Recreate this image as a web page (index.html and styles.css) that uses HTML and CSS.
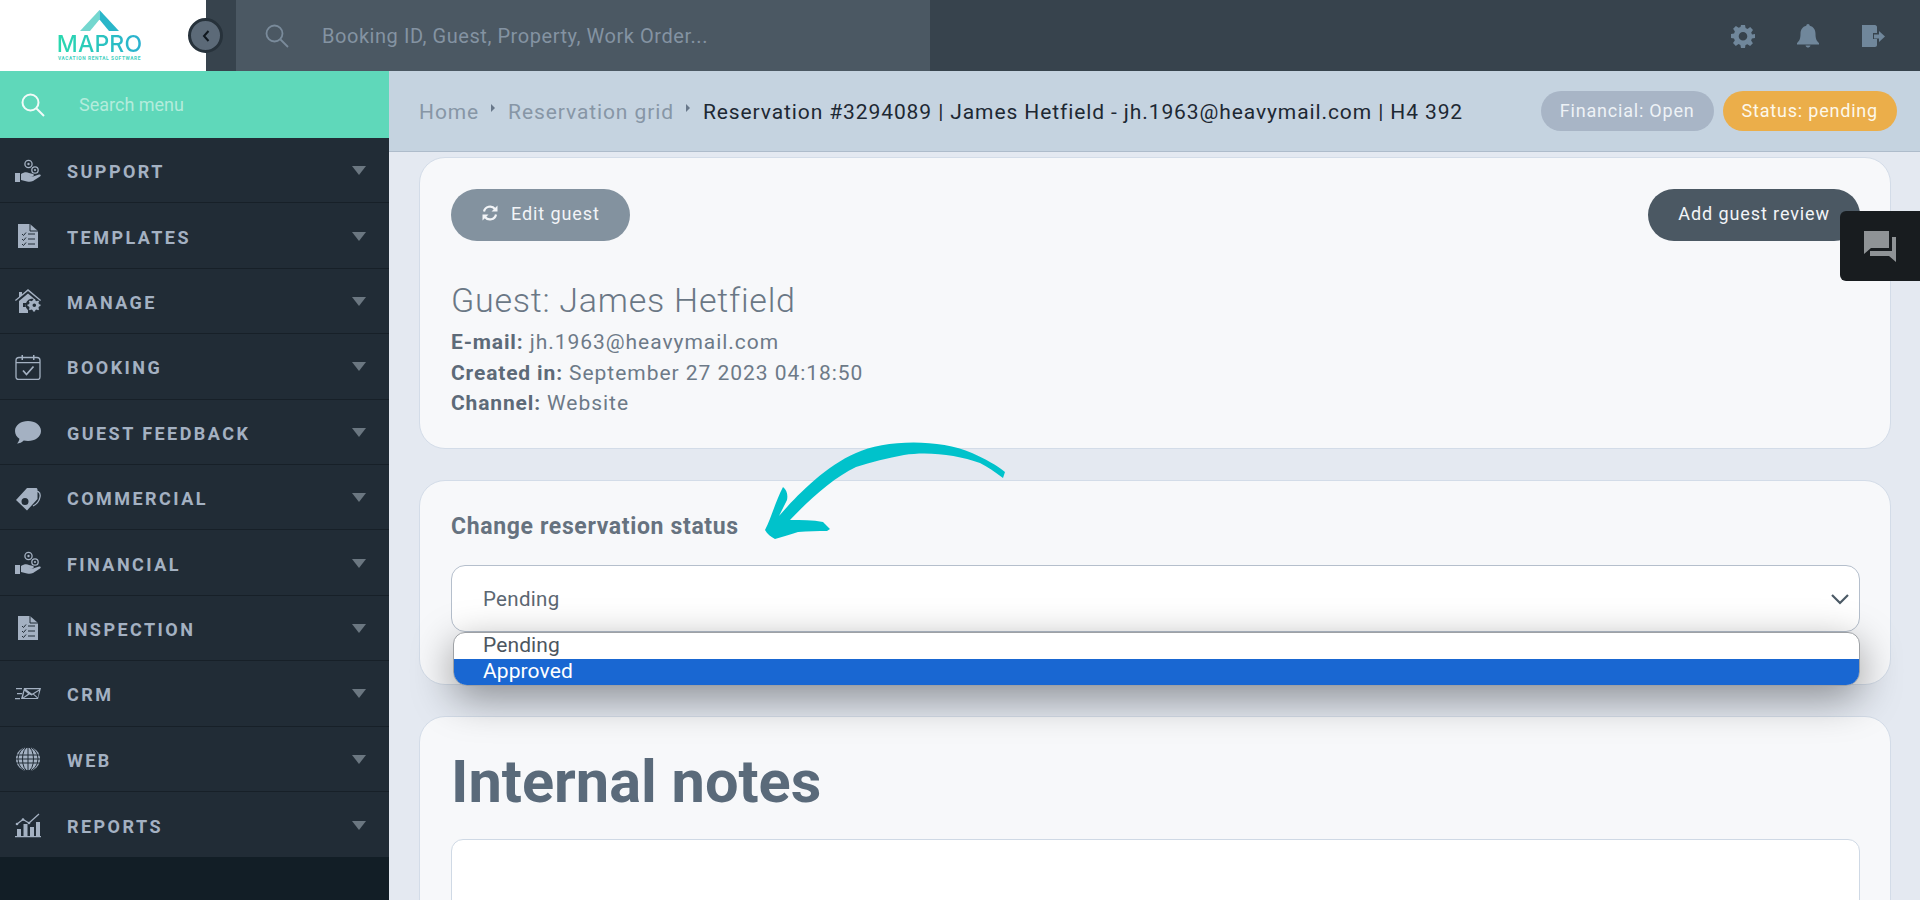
FILE: index.html
```html
<!DOCTYPE html>
<html lang="en">
<head>
<meta charset="utf-8">
<title>Reservation #3294089</title>
<link rel="stylesheet" href="styles.css">
</head>
<body>
<svg class="defs" width="0" height="0" aria-hidden="true">
  <symbol id="i-hand" viewBox="0 0 26 24">
    <path d="M0 14h5v9H0zM6 15c3-2 6-2 8-1l4 1c1.500 .5 1 2.500-1 2.200l-4-.4 5 .8 6-2c1.500-.4 2.500 1 1 2l-7 4.400c-2 1-4 1-6 .4l-6-1.400z"/>
    <circle cx="13.500" cy="5" r="3.600" fill="none" stroke="currentColor" stroke-width="1.300"/>
    <circle cx="13.500" cy="5" r="1.200"/>
    <circle cx="20" cy="11" r="3.200" fill="none" stroke="currentColor" stroke-width="1.300"/>
    <circle cx="20" cy="11" r="1.100"/>
  </symbol>
  <symbol id="i-doc" viewBox="0 0 26 26">
    <path d="M3 1h12l8 7v17H3z"/>
    <g fill="none" stroke="#212c36" stroke-width="1">
      <path d="M15 1v7h8"/>
      <path d="m7 11 1.500 1.500 2.500-3M13 11h7M7 16l1.500 1.500 2.500-3M13 16h7M7 21l1.500 1.500 2.500-3M13 21h7"/>
    </g>
  </symbol>
</svg>

<header class="top">
  <div class="logo">
    <svg class="roof" width="40" height="22" viewBox="0 0 40 22" aria-hidden="true">
      <path class="roof-l" d="M19.500 0v9.500L10 21H0z"/>
      <path class="roof-r" d="M19.500 0 39 21H29L19.500 9.500z"/>
    </svg>
    <div class="logo-name">MAPRO</div>
    <div class="logo-sub">VACATION RENTAL SOFTWARE</div>
  </div>
  <button class="collapse" aria-label="Collapse">
    <svg width="10" height="14" viewBox="0 0 10 14"><path d="M7.500 2 3 7l4.500 5" fill="none" stroke="#10181f" stroke-width="2"/></svg>
  </button>
  <div class="topbar">
    <div class="topsearch">
      <svg class="lens" width="26" height="26" viewBox="0 0 26 26"><circle cx="10.500" cy="10.500" r="8" fill="none" stroke="currentColor" stroke-width="1.800"/><path d="M16.500 16.500 24 24" stroke="currentColor" stroke-width="1.800"/></svg>
      <span class="placeholder">Booking ID, Guest, Property, Work Order...</span>
    </div>
    <div class="topicons">
      <svg width="24" height="24" viewBox="0 0 24 24"><path fill="currentColor" fill-rule="evenodd" d="M10 1h4l.6 3.100 1.900.8 2.700-1.800 2.800 2.800-1.800 2.700.8 1.900L24 10v4l-3.100.6-.8 1.900 1.800 2.700-2.800 2.800-2.700-1.800-1.900.8L14 24h-4l-.6-3.100-1.900-.8-2.700 1.800-2.800-2.800 1.800-2.700-.8-1.900L0 14v-4l3.100-.6.8-1.900-1.800-2.700L4.900 2l2.700 1.800 1.900-.8zM12 8a4.300 4.300 0 1 0 0 8.600A4.300 4.300 0 0 0 12 8z"/></svg>
      <svg width="24" height="24" viewBox="0 0 24 24"><path fill="currentColor" d="M12 0c1 0 1.700.7 1.700 1.800 4 1 5.800 4 5.800 8 0 5 1 7 3.500 9.200v1.500H1V19c2.500-2.200 3.500-4.200 3.500-9.200 0-4 1.800-7 5.800-8C10.300.7 11 0 12 0zM9.500 21.500h5C14 23 13 23.500 12 23.500s-2-.5-2.500-2z"/></svg>
      <svg width="24" height="24" viewBox="0 0 24 24"><path fill="currentColor" d="M1 1h13c1 0 2 1 2 2v6h-4v6h4v6c0 1-1 2-2 2H1zM13 10.500h5V7l6 5.500-6 5.500v-3.500h-5z"/></svg>
    </div>
  </div>
</header>

<div class="shell">
  <nav class="side">
    <div class="menusearch">
      <svg width="26" height="26" viewBox="0 0 26 26"><circle cx="10.500" cy="10.500" r="8" fill="none" stroke="currentColor" stroke-width="2"/><path d="M16.500 16.500 24 24" stroke="currentColor" stroke-width="2"/></svg>
      <span>Search menu</span>
    </div>
    <ul class="menu">
      <li><svg class="mi" viewBox="0 0 26 24"><use href="#i-hand"/></svg><span>SUPPORT</span><i></i></li>
      <li><svg class="mi" viewBox="0 0 26 26"><use href="#i-doc"/></svg><span>TEMPLATES</span><i></i></li>
      <li><svg class="mi" viewBox="0 0 26 26"><path fill-rule="evenodd" d="M13 1 26 12l-.8 1L13 3 .8 13 0 12 4 8.700V4h3v2.200zM4 13l9-7.500 8 6.700a6 6 0 0 0-8 10V25H4zM8 15v4h3v-4z"/><path fill-rule="evenodd" d="m18.500 14.500 1.500.1.400 1.500 1.400.6 1.300-.8 1.100 1.100-.8 1.300.6 1.400 1.500.4v1.500l-1.500.4-.6 1.400.8 1.300-1.100 1.100-1.300-.8-1.400.6-.4 1.500H18l-.4-1.500-1.400-.6-1.300.8-1.100-1.100.8-1.300-.6-1.400-1.500-.4v-1.500l1.500-.4.6-1.400-.8-1.300 1.100-1.100 1.300.8 1.400-.6zm.8 4.500a1.800 1.800 0 1 0 0 3.600 1.800 1.800 0 0 0 0-3.600z" transform="translate(0 -3.500)"/></svg><span>MANAGE</span><i></i></li>
      <li><svg class="mi" viewBox="0 0 26 26"><path fill="none" stroke="currentColor" stroke-width="1.300" d="M4 3.500H22c1.500 0 3 1 3 3V23c0 1.500-1 2.500-2.500 2.500H3.500C2 25.500 1 24.500 1 23V6.500c0-2 1.500-3 3-3z"/><path d="M1 8h24v1.300H1zM6.500 1h1.500v5H6.500zM18 1h1.500v5H18z"/><path fill="none" stroke="currentColor" stroke-width="1.800" d="m8 16.500 3.500 4 7-8"/></svg><span>BOOKING</span><i></i></li>
      <li><svg class="mi" viewBox="0 0 26 26"><path d="M13 2c7 0 13 4 13 10s-6 10-13 10c-1.500 0-3-.2-4.300-.5C7 23.500 4.500 24.500 2 24.500c1.400-1.400 2.200-3 2.400-4.800C1.700 18 0 15.200 0 12 0 6 6 2 13 2z"/></svg><span>GUEST FEEDBACK</span><i></i></li>
      <li><svg class="mi" viewBox="0 0 26 26"><path fill-rule="evenodd" d="M12 3h9c.8 0 1.500.7 1.500 1.500V14L12 25.500 1 15zM10 13a3.500 3.500 0 1 0 0 7 3.500 3.500 0 0 0 0-7z"/><path fill="none" stroke="currentColor" stroke-width="1.300" d="M17 8c5-4 9-1 8 4-.5 3-3 7-7 9"/></svg><span>COMMERCIAL</span><i></i></li>
      <li><svg class="mi" viewBox="0 0 26 24"><use href="#i-hand"/></svg><span>FINANCIAL</span><i></i></li>
      <li><svg class="mi" viewBox="0 0 26 26"><use href="#i-doc"/></svg><span>INSPECTION</span><i></i></li>
      <li><svg class="mi" viewBox="0 0 26 26"><path fill-rule="evenodd" d="M9 7h17l-3 11H6zM11 8.200l6 4.500 7.500-4.500zM9.500 9.800 8 16.500l5-3.800zM24 9.800 19 13l4 3.500zM14.500 13.500 9 17h13l-4-3.500-1.300 1z"/><path d="M1 7h6v1.300H1zM2 12h5v1.300H2zM0 17h5v1.300H0z"/></svg><span>CRM</span><i></i></li>
      <li><svg class="mi" viewBox="0 0 26 26"><circle cx="13" cy="13" r="12"/><g fill="none" stroke="#212c36" stroke-width="1"><path d="M1 9h24M1 13h24M1 17h24M13 1v24"/><ellipse cx="13" cy="13" rx="5.500" ry="12"/><ellipse cx="13" cy="13" rx="10" ry="12"/></g></svg><span>WEB</span><i></i></li>
      <li><svg class="mi" viewBox="0 0 26 26"><path d="M0 24h26v1.300H0zM2 17h4v7H2zM8.500 12h4v12h-4zM15 15h4v9h-4zM21 10h4v14h-4z"/><path fill="none" stroke="currentColor" stroke-width="1.300" d="m2 12 6-4.500 6 3.500L24 2"/><circle cx="2" cy="12" r="1.300"/><circle cx="8" cy="7.500" r="1.300"/><circle cx="14" cy="11" r="1.300"/></svg><span>REPORTS</span><i></i></li>
    </ul>
    <div class="sidefoot"></div>
  </nav>

  <main class="main">
    <div class="crumbs">
      <a>Home</a><b></b><a>Reservation grid</a><b></b><span class="current">Reservation #3294089 | James Hetfield - jh.1963@heavymail.com | H4 392</span>
      <div class="pills"><span class="pill pill-grey">Financial: Open</span><span class="pill pill-orange">Status: pending</span></div>
    </div>
    <div class="content">
      <section class="card card-guest">
        <div class="actions">
          <button class="btn btn-grey">
            <svg width="18" height="18" viewBox="0 0 18 18"><path fill="none" stroke="currentColor" stroke-width="2.200" d="M3 7.500A6.200 6.200 0 0 1 14 5M15 10.500A6.200 6.200 0 0 1 4 13"/><path fill="currentColor" d="M16.500 1.500v6h-6zM1.500 16.500v-6h6z"/></svg>
            Edit guest
          </button>
          <button class="btn btn-dark">Add guest review</button>
        </div>
        <h2 class="guest">Guest: James Hetfield</h2>
        <p class="line"><strong>E-mail:</strong> jh.1963@heavymail.com</p>
        <p class="line"><strong>Created in:</strong> September 27 2023 04:18:50</p>
        <p class="line"><strong>Channel:</strong> Website</p>
      </section>

      <section class="card card-status">
        <h3 class="status-title">Change reservation status</h3>
        <div class="selectwrap">
          <div class="select">
            <span>Pending</span>
            <svg width="20" height="12" viewBox="0 0 20 12"><path d="m2 2 8 8 8-8" fill="none" stroke="#4c5a66" stroke-width="2.200"/></svg>
          </div>
          <div class="dropdown">
            <div class="opt">Pending</div>
            <div class="opt opt-on">Approved</div>
          </div>
        </div>
      </section>

      <section class="card card-notes">
        <h1 class="notes-title">Internal notes</h1>
        <div class="notes-box"></div>
      </section>
    </div>
  </main>
</div>

<svg class="arrow" width="260" height="110" viewBox="0 0 260 110" aria-hidden="true">
  <path fill="#00c2cb" d="M2 88C9 74 13 58 20 45 24 48 25 53 24 58L16 74C30 58 60 25 93 11 120-2 175-4 209 11 222 17 234 23 242 30L240 36C232 30 225 25 217 21 195 13 165 9 141 13 125 16 108 20 93 25 70 36 47 57 27 78 38 78 50 78 60 80L67 87 64 89C55 89 45 89 35 90 28 92 20 95 12 97 8 95 4 92 2 88Z"/>
</svg>
<aside class="chat" aria-label="Chat">
  <svg width="34" height="32" viewBox="0 0 34 32"><path fill="#8f9396" d="M1 1h25v17H8l-7 6z"/><path fill="#8f9396" d="M29 7h4v25l-7-6H7v-5h22z"/></svg>
</aside>
</body>
</html>
```

FILE: styles.css
```css
* { box-sizing: border-box; }
html, body { margin: 0; height: 900px; overflow: hidden; }
body { font-family: Roboto, "Liberation Sans", sans-serif; background: #e4e9f1; position: relative; }
.defs { position: absolute; }
button { font: inherit; }
h1, h2, h3, p, ul { margin: 0; padding: 0; }

.top { display: flex; height: 71px; position: relative; }
.logo { width: 206px; background: #fff; display: flex; flex-direction: column; align-items: center; padding: 10px 0 0 0; flex: none; }
.logo .roof { display: block; margin: 0 0 0 -7px; }
.roof-l { fill: #74d7cf; }
.roof-r { fill: #2ab6c9; }
.logo-name { font-family: Inter, sans-serif; font-size: 23px; line-height: 20px; font-weight: 500; letter-spacing: .2px; margin: 2px 0 0 -7px; background: linear-gradient(90deg, #2ad9ae, #2bb0d0); -webkit-background-clip: text; background-clip: text; color: transparent; }
.logo-sub { font-size: 4.800px; line-height: 6px; font-weight: 700; letter-spacing: .62px; color: #3fd0c0; margin: 2px 0 0 -7px; white-space: nowrap; }
.collapse { position: absolute; left: 188px; top: 18px; width: 35px; height: 35px; border-radius: 50%; background: #5c6a78; border: 3px solid #27323b; padding: 0; display: flex; align-items: center; justify-content: center; }
.topbar { flex: 1; background: #37434d; display: flex; justify-content: space-between; padding-left: 30px; }
.topsearch { width: 694px; background: #4b5863; display: flex; align-items: center; padding-left: 28px; color: #7a8b9b; gap: 32px; }
.placeholder { font-size: 20px; letter-spacing: .55px; color: #8493a2; }
.topicons { display: flex; align-items: center; gap: 41px; padding-right: 35px; color: #70879b; }

.shell { display: flex; height: 829px; }
.side { width: 389px; flex: none; display: flex; flex-direction: column; background: #121e26; }
.menusearch { height: 67px; background: #5fd8ba; display: flex; align-items: center; padding-left: 20px; gap: 33px; color: #f2fbf8; font-size: 18px; }
.menusearch span { color: #b4ecdc; }
.menu { list-style: none; }
.menu li { height: 65.400px; display: flex; align-items: center; background: #212c36; border-bottom: 1.500px solid #172028; padding: 3px 0 0 15px; color: #a4b1c2; }
.menu li:last-child { border-bottom: 0; }
.mi { width: 26px; height: 26px; fill: currentColor; flex: none; margin: -2px 26px 0 0; }
.menu span { font-size: 18px; font-weight: 700; letter-spacing: 2.450px; flex: 1; }
.menu i { width: 0; height: 0; border-left: 7.500px solid transparent; border-right: 7.500px solid transparent; border-top: 9px solid #6b7781; margin: -2px 23px 0 0; }

.main { flex: 1; min-width: 0; display: flex; flex-direction: column; }
.crumbs { height: 81px; flex: none; background: #c5d3e0; border-bottom: 1px solid #aebccb; display: flex; align-items: center; padding: 2px 23px 0 30px; font-size: 21px; letter-spacing: .9px; color: #8796a6; }
.crumbs a { color: #8796a6; }
.crumbs b { width: 0; height: 0; border-top: 4px solid transparent; border-bottom: 4px solid transparent; border-left: 4px solid #69788a; margin: -8px 13px 0 12px; }
.current { color: #1d2833; }
.pills { margin: -2px 0 0 auto; display: flex; gap: 9px; }
.pill { height: 40px; border-radius: 20px; display: flex; align-items: center; padding: 0 19px 2px; font-size: 18px; color: #eef2f6; letter-spacing: .8px; }
.pill-grey { background: #a8b5c6; }
.pill-orange { background: #ebae4a; color: #fdf8ea; }

.content { flex: 1; min-height: 0; padding: 5px 29px 0 30px; display: flex; flex-direction: column; gap: 31px; overflow: hidden; }
.card { background: #f7f8fa; border: 1px solid #d3dce8; border-radius: 26px; flex: none; padding: 31px 30px 0 31px; }
.card-guest { height: 292px; }
.card-status { height: 205px; padding-top: 0; position: relative; z-index: 2; }
.actions { display: flex; justify-content: space-between; }
.btn { height: 52px; border: 0; border-radius: 26px; color: #f2f4f7; font-size: 18px; letter-spacing: .9px; display: flex; align-items: center; gap: 12px; padding: 0 30px 4px; }
.btn-grey { background: #83929f; }
.btn-dark { background: #4b5863; }
.guest { font-size: 34px; font-weight: 300; letter-spacing: .75px; color: #6a7785; line-height: 40px; margin: 39px 0 7px; }
.line { font-size: 21px; line-height: 30.500px; letter-spacing: .96px; color: #6d7a88; }
.line strong { font-weight: 700; color: #5d6a78; letter-spacing: .85px; }

.status-title { font-size: 23px; font-weight: 700; letter-spacing: .65px; color: #66727f; line-height: 28px; padding-top: 32px; margin-bottom: 24px; }
.selectwrap { position: relative; }
.select { height: 67px; background: #fff; border: 1px solid #b5bfcc; border-radius: 14px; display: flex; align-items: center; justify-content: space-between; padding: 0 9px 0 31px; font-size: 20.500px; letter-spacing: .3px; color: #5c6772; }
.dropdown { position: absolute; left: 2px; right: 0; top: 67px; height: 54px; background: #fff; border: 1px solid #9ea1a5; border-radius: 12px 12px 14px 14px; overflow: hidden; box-shadow: 0 12px 42px rgba(0, 0, 0, .4); font-size: 21px; letter-spacing: .1px; color: #4c5660; }
.opt { height: 26px; line-height: 24px; padding-left: 29px; }
.opt-on { background: #1967d2; color: #fff; height: 26px; line-height: 25px; }

.card-notes { height: 300px; background: #f7f8fa; }
.notes-title { font-size: 59.500px; font-weight: 700; color: #5a6a7a; line-height: 70px; margin-top: -1px; }
.notes-box { height: 120px; margin-top: 22px; background: #fff; border: 1px solid #cfd9e5; border-radius: 12px; }

.arrow { position: absolute; left: 763px; top: 442px; z-index: 5; }
.chat { position: absolute; right: 0; top: 211px; width: 80px; height: 70px; background: #181c1f; border-radius: 6px 0 0 6px; display: flex; align-items: center; justify-content: center; z-index: 6; }
```
